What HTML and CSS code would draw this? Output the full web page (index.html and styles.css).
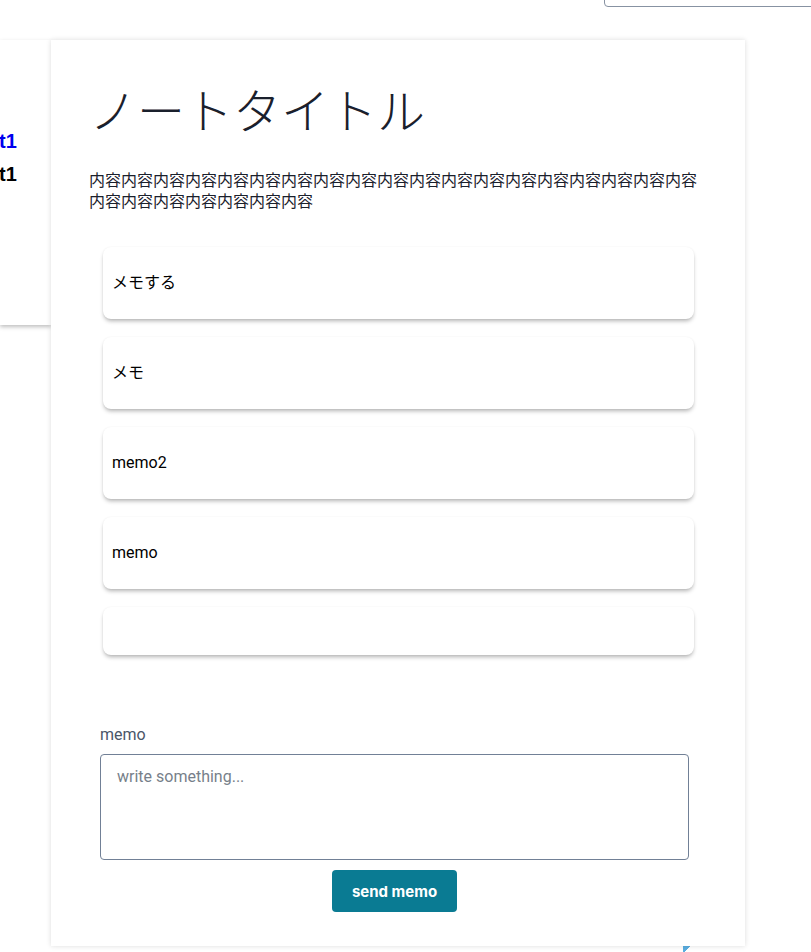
FILE: index.html
```html
<!DOCTYPE html>
<html lang="ja">
<head>
<meta charset="utf-8">
<link rel="stylesheet" href="styles.css">
</head>
<body>
<header class="topbar">
  <div class="search"></div>
</header>
<div class="layout">
  <aside class="sidebar">
    <a class="nav-link active">t1</a>
    <a class="nav-link">t1</a>
  </aside>
  <main class="note">
    <h1 class="note-title">ノートタイトル</h1>
    <p class="note-body">内容内容内容内容内容内容内容内容内容内容内容内容内容内容内容内容内容内容内容内容内容内容内容内容内容内容</p>
    <ul class="memo-list">
      <li class="memo-card">メモする</li>
      <li class="memo-card">メモ</li>
      <li class="memo-card">memo2</li>
      <li class="memo-card">memo</li>
      <li class="memo-card empty"></li>
    </ul>
    <form class="memo-form">
      <label class="memo-label" for="memo">memo</label>
      <textarea id="memo" class="memo-input" placeholder="write something..."></textarea>
      <button type="button" class="send-btn">send memo</button>
    </form>
  </main>
</div>
<div class="footer-row"><span class="corner"></span></div>
</body>
</html>
```

FILE: styles.css
```css
html, body {
  margin: 0;
  padding: 0;
  background: #ffffff;
  overflow: hidden;
  height: 952px;
}
body {
  font-family: Roboto, "Noto Sans CJK JP", sans-serif;
  color: #1a202c;
}
.topbar {
  height: 7px;
  display: flex;
  justify-content: flex-end;
}
.search {
  width: 240px;
  height: 40px;
  margin-top: -33px;
  margin-right: -33px;
  border: 1px solid #8792a2;
  border-radius: 4px;
  box-sizing: border-box;
  flex-shrink: 0;
}
.layout {
  display: flex;
  margin-top: 33px;
  align-items: flex-start;
}
.sidebar {
  width: 51px;
  height: 285px;
  flex-shrink: 0;
  background: #fff;
  box-shadow: 0 2px 4px rgba(0,0,0,0.25);
  display: flex;
  flex-direction: column;
  padding-top: 85px;
  box-sizing: border-box;
  overflow: hidden;
}
.nav-link {
  font-family: "Liberation Sans", Arial, sans-serif;
  font-weight: bold;
  font-size: 20px;
  line-height: 33px;
  color: #000;
  margin-left: -1px;
}
.nav-link.active {
  color: #0000ee;
}
.note {
  width: 694px;
  height: 906px;
  flex-shrink: 0;
  background: #fff;
  box-shadow: 0 0 5px rgba(0,0,0,0.14);
  padding: 0 38px;
  box-sizing: border-box;
  position: relative;
  z-index: 1;
}
.note-title {
  margin: 0;
  padding-top: 32px;
  font-family: "Noto Sans CJK JP", sans-serif;
  font-weight: 300;
  font-size: 48px;
  line-height: 72px;
  color: #1a202c;
}
.note-body {
  margin: 25px 0 0;
  font-family: "Noto Sans CJK JP", sans-serif;
  font-size: 16px;
  line-height: 21px;
  color: #1a202c;
}
.memo-list {
  list-style: none;
  margin: 36px 0 0;
  padding: 0 13px 0 14px;
  display: flex;
  flex-direction: column;
  gap: 18px;
}
.memo-card {
  background: #fff;
  border-radius: 8px;
  box-shadow: 0 3px 4px -1px rgba(0,0,0,0.3), 0 0 2px rgba(0,0,0,0.06);
  padding: 24px 9px;
  font-family: Roboto, "Noto Sans CJK JP", sans-serif;
  font-size: 16px;
  line-height: 24px;
  color: #000;
}
.memo-card.empty {
  height: 0;
}
.memo-form {
  margin: 68px 18px 0 11px;
  display: flex;
  flex-direction: column;
}
.memo-label {
  font-family: Roboto, sans-serif;
  font-size: 16px;
  line-height: 24px;
  color: #4a5568;
  margin-bottom: 7px;
}
.memo-input {
  height: 106px;
  box-sizing: border-box;
  border: 1px solid #718096;
  border-radius: 4px;
  padding: 10px 16px;
  font-family: Roboto, sans-serif;
  font-size: 16px;
  line-height: 24px;
  resize: none;
  margin: 0;
}
.memo-input::placeholder {
  color: #777f8a;
}
.send-btn {
  align-self: center;
  margin-top: 10px;
  width: 125px;
  height: 42px;
  border: none;
  border-radius: 4px;
  background: #0a7b93;
  color: #fff;
  font-family: Inter, sans-serif;
  font-weight: 700;
  font-size: 15px;
}
.footer-row {
  display: flex;
  padding-left: 683px;
}
.corner {
  width: 10px;
  height: 6px;
  background: linear-gradient(135deg, #5aaee0 50%, transparent 50%);
}
```
